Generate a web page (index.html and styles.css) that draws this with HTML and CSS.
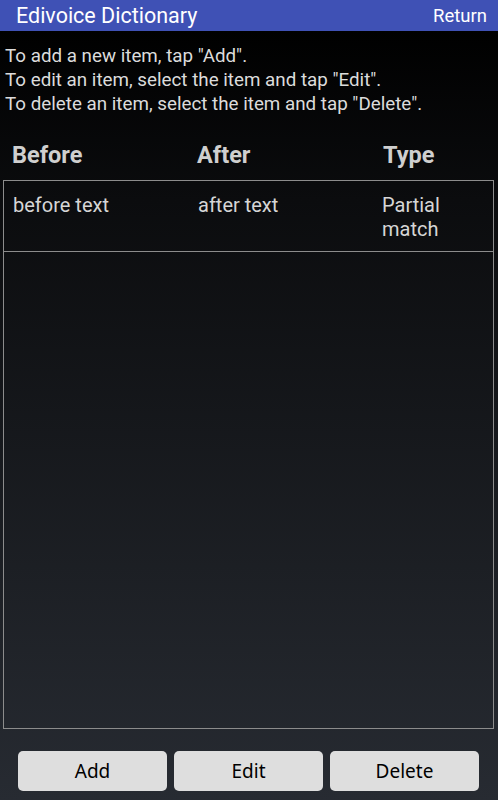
FILE: index.html
```html
<!DOCTYPE html>
<html lang="en">
<head>
    <meta charset="UTF-8">
    <meta name="viewport" content="width=device-width, initial-scale=1.0">
    <title>Edivoice Dictionary</title>
    <link rel="stylesheet" href="styles.css">
</head>
<body>
    <div class="screen">
        <header class="topbar">
            <h1 class="title">Edivoice Dictionary</h1>
            <a href="#" class="return">Return</a>
        </header>

        <div class="help">
            <p>To add a new item, tap "Add".</p>
            <p>To edit an item, select the item and tap "Edit".</p>
            <p>To delete an item, select the item and tap "Delete".</p>
        </div>

        <div class="cols heads">
            <span>Before</span>
            <span>After</span>
            <span>Type</span>
        </div>

        <div class="list">
            <div class="cols row">
                <span>before text</span>
                <span>after text</span>
                <span>Partial<br>match</span>
            </div>
        </div>

        <div class="buttons">
            <button>Add</button>
            <button>Edit</button>
            <button>Delete</button>
        </div>
    </div>
</body>
</html>
```

FILE: styles.css
```css
* {
    box-sizing: border-box;
}

body {
    margin: 0;
    font-family: Roboto, "Noto Sans", sans-serif;
    background: #000;
}

.screen {
    height: 800px;
    display: flex;
    flex-direction: column;
    background: linear-gradient(to bottom, #000 30px, #0b0c0e 200px, #272b32 800px);
}

.topbar {
    height: 31px;
    display: flex;
    align-items: center;
    justify-content: space-between;
    padding: 0 11px 0 16px;
    background-color: #3f51b5;
}

.title {
    margin: 0;
    font-size: 21.5px;
    font-weight: normal;
    color: #fff;
}

.return {
    color: #fff;
    font-size: 18.5px;
    text-decoration: none;
}

.help {
    padding: 13px 0 0 5px;
}

.help p {
    margin: 0;
    font-size: 18.8px;
    line-height: 24px;
    color: #dcdcdc;
}

.cols {
    display: grid;
    grid-template-columns: 185px 184px 1fr;
}

.heads {
    padding: 25px 0 0 12px;
    height: 64px;
    font-size: 23.5px;
    line-height: 28px;
    font-weight: bold;
    color: #cfcfcf;
}

.heads span:last-child {
    padding-left: 2px;
}

.list {
    flex: 1;
    margin: 0 4px 0 3px;
    border: 1px solid #8c8c8c;
    min-height: 0;
}

.row {
    height: 71px;
    padding: 12px 0 0 9px;
    border-bottom: 1px solid #8c8c8c;
    font-size: 20px;
    line-height: 24px;
    color: #d6d6d6;
}

.buttons {
    display: flex;
    gap: 7px;
    padding: 22px 19px 9px 18px;
}

button {
    flex: 1;
    height: 40px;
    border: 0;
    border-radius: 5px;
    background-color: #dedede;
    color: #000;
    font-family: "Noto Sans", sans-serif;
    font-size: 19px;
    cursor: pointer;
}
```
